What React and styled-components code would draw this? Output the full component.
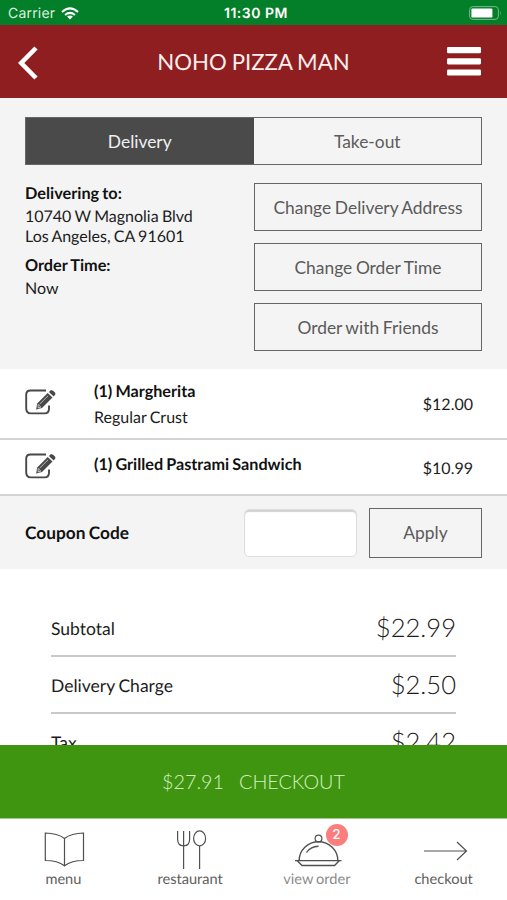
import React from "react";
import styled, { createGlobalStyle } from "styled-components";

const GlobalStyle = createGlobalStyle`
  * { box-sizing: border-box; }
  body { margin: 0; background: #fff; }
  button, input { font: inherit; word-spacing: inherit; }
`;

const Screen = styled.div`
  width: 507px;
  height: 900px;
  display: flex;
  flex-direction: column;
  overflow: hidden;
  background: #fff;
  color: #1c1c1c;
  font-family: Lato, sans-serif;
  font-size: 16px;
  word-spacing: -0.8px;
  text-rendering: geometricPrecision;
`;

const StatusBar = styled.div`
  height: 25px;
  flex: none;
  display: grid;
  grid-template-columns: 1fr auto 1fr;
  align-items: center;
  padding: 2px 5px 0 8px;
  background: #047f29;
  color: #fff;
  font-family: Inter, sans-serif;
  font-size: 14px;
  word-spacing: 0;
`;

const Carrier = styled.div`
  display: flex;
  align-items: center;
  gap: 6px;
  color: #d9f0df;
  letter-spacing: 0.2px;
`;

const Clock = styled.div`
  padding-left: 2px;
  font-weight: 600;
  font-size: 14px;
  letter-spacing: 0.5px;
`;

const BatterySlot = styled.div`
  display: flex;
  justify-content: flex-end;
  padding-bottom: 1px;
`;

const Header = styled.header`
  height: 73px;
  flex: none;
  display: grid;
  grid-template-columns: 60px 1fr 60px;
  align-items: center;
  background: #8e1e1f;
  color: #fbeeee;
`;

const Title = styled.h1`
  margin: 0;
  text-align: center;
  font-size: 22.2px;
  font-weight: 400;
`;

const IconButton = styled.button`
  display: flex;
  justify-content: ${(p) => p.$align};
  width: 60px;
  padding: 0 ${(p) => p.$right || 0}px 0 ${(p) => p.$left || 0}px;
  border: 0;
  background: none;
`;

const Content = styled.main`
  flex: 1;
  min-height: 0;
  overflow: hidden;
`;

const OrderPanel = styled.section`
  height: 271px;
  padding: 19px 25px 0;
  background: #f4f4f4;
`;

const Tabs = styled.div`
  display: grid;
  grid-template-columns: 1fr 1fr;
  height: 48px;
  border: 1px solid #666;
`;

const Tab = styled.button`
  border: 0;
  padding: 1px 0 0;
  font-size: 17.4px;
  background: ${(p) => (p.$active ? "#4a4a4a" : "transparent")};
  color: ${(p) => (p.$active ? "#f0f0f0" : "#5c5c5c")};
`;

const Details = styled.div`
  display: grid;
  grid-template-columns: 229px 228px;
  margin-top: 18px;
`;

const Address = styled.div`
  display: flex;
  flex-direction: column;
  padding-top: 1px;
  line-height: 20px;
`;

const Label = styled.div`
  font-weight: 700;
  font-size: 16.3px;
  color: #111;
  margin: ${(p) => (p.$spaced ? "9px 0 3px" : "0 0 3px")};
`;

const Actions = styled.div`
  display: flex;
  flex-direction: column;
  gap: 12px;
`;

const OutlineButton = styled.button`
  width: ${(p) => p.$width || 228}px;
  height: ${(p) => p.$height || 48}px;
  padding: 0;
  border: 1px solid #666;
  background: transparent;
  color: #5a5a5a;
  font-size: 17.4px;
`;

const ItemRow = styled.div`
  display: grid;
  grid-template-columns: 69px 1fr auto;
  align-items: center;
  height: ${(p) => p.$height}px;
  padding: 0 34px 0 25px;
  border-bottom: 2px solid #d4d4d4;
`;

const ItemText = styled.div`
  line-height: 26px;
  padding: 2px 0 ${(p) => p.$lift || 0}px;
`;

const ItemName = styled.div`
  font-weight: 700;
  color: #111;
  font-size: 16.2px;
`;

const Price = styled.div`
  padding-top: 2px;
`;

const Coupon = styled.section`
  display: flex;
  align-items: center;
  height: 73px;
  padding: 0 25px;
  background: #f4f4f4;
`;

const CouponLabel = styled.label`
  flex: 1;
  font-size: 17.3px;
  font-weight: 700;
  color: #111;
`;

const CouponInput = styled.input`
  width: 113px;
  height: 48px;
  margin-right: 12px;
  border: 1px solid #dedede;
  border-radius: 5px;
  background: #fff;
  box-shadow: inset 0 2px 1px #d2d2d2;
`;

const Totals = styled.section`
  padding: 31px 51px 0;
`;

const TotalRow = styled.div`
  display: flex;
  align-items: center;
  justify-content: space-between;
  height: 57px;
  padding-top: 2px;
  border-bottom: 2px solid #c9c9c9;
  font-size: 17.5px;
`;

const Amount = styled.span`
  padding-bottom: 2px;
  font-size: 25.6px;
  font-weight: 300;
`;

const Checkout = styled.button`
  flex: none;
  display: flex;
  align-items: center;
  justify-content: center;
  gap: 15px;
  height: 74px;
  padding: 0 0 1px;
  border: 0;
  border-bottom: 1px solid #a3c98c;
  background: #409510;
  color: #d3f0c0;
  font-size: 19.8px;
  font-weight: 300;
`;

const BottomNav = styled.nav`
  flex: none;
  display: grid;
  grid-template-columns: repeat(4, 1fr);
  height: 81px;
  background: #fff;
`;

const NavItem = styled.div`
  position: relative;
  display: flex;
  flex-direction: column;
  align-items: center;
  gap: 1px;
  padding-top: 10px;
  color: ${(p) => (p.$muted ? "#8b8b8b" : "#606060")};
  font-size: 14.6px;
  line-height: 18px;
`;

const NavIcon = styled.svg`
  width: 50px;
  height: 41px;
  fill: none;
  stroke: #505050;
  stroke-width: 1.2;
`;

const Badge = styled.span`
  position: absolute;
  top: 5px;
  left: 72px;
  width: 22px;
  height: 22px;
  border-radius: 50%;
  background: #fb7d7d;
  color: #fff;
  font: 500 13.5px/22px Inter, sans-serif;
  text-align: center;
`;

const WifiIcon = () => (
  <svg width="18" height="13" viewBox="0 0 18 13" fill="none" stroke="#fff" strokeWidth="2">
    <path d="M1 4.9Q9-2.1 17 4.9M4 8Q9 3.8 14 8" />
    <path d="M6.1 9.6Q9 7.4 11.9 9.6L9 12.5Z" fill="#fff" stroke="none" />
  </svg>
);

const BatteryIcon = () => (
  <svg width="33" height="14" viewBox="0 0 33 14">
    <rect x=".6" y=".6" width="28.8" height="12.8" rx="3.2" fill="none" stroke="#79b989" />
    <rect x="2.4" y="2.4" width="21" height="9.2" rx="1.2" fill="#fff" />
    <path d="M31 4.7q1.6 2.3 0 4.6z" fill="#79b989" />
  </svg>
);

const EditSvg = styled.svg`
  margin-bottom: 3px;
`;

const EditIcon = () => (
  <EditSvg width="31" height="26" viewBox="0 0 31 26" fill="none">
    <path d="M21 1.5H5.5Q1.2 1.5 1.2 5.8V19.3Q1.2 24.4 5.8 24.4H19.5Q24 24.4 24 19.5V16.5" stroke="#484848" strokeWidth="1.9" />
    <path d="M11.1 20.5L12.2 14.4L22.7 3.9L27.5 8.5L17 19Z" fill="#484848" />
    <path d="M23.9 2.9L26 1Q28 1 30.4 4Q31 5.2 28.7 7.4Z" fill="#484848" />
    <path d="M14.6 15.2L23.1 6.8M13.2 15.4L15.8 18.2L13 18.9Z" stroke="#d8d8d8" strokeWidth=".8" />
  </EditSvg>
);

const items = [
  { name: "(1) Margherita", note: "Regular Crust", price: "$12.00", height: 71 },
  { name: "(1) Grilled Pastrami Sandwich", price: "$10.99", height: 56, lift: 6 },
];

const totals = [
  ["Subtotal", "$22.99"],
  ["Delivery Charge", "$2.50"],
  ["Tax", "$2.42"],
];

export default function App() {
  return (
    <Screen>
      <GlobalStyle />
      <StatusBar>
        <Carrier>Carrier <WifiIcon /></Carrier>
        <Clock>11:30 PM</Clock>
        <BatterySlot><BatteryIcon /></BatterySlot>
      </StatusBar>
      <Header>
        <IconButton $align="flex-start" $left={18} aria-label="Back">
          <svg width="21" height="38" viewBox="0 0 21 38" fill="none" stroke="#fff" strokeWidth="4.6">
            <path d="M18 5L3.2 20L18 35" />
          </svg>
        </IconButton>
        <Title>NOHO PIZZA MAN</Title>
        <IconButton $align="flex-end" $right={26} aria-label="Open navigation">
          <svg width="34" height="30" viewBox="0 0 34 30" fill="#fff">
            <rect y="0" width="34" height="6.2" rx="1.3" />
            <rect y="11.2" width="34" height="6.2" rx="1.3" />
            <rect y="22.4" width="34" height="6.2" rx="1.3" />
          </svg>
        </IconButton>
      </Header>
      <Content>
        <OrderPanel>
          <Tabs>
            <Tab $active>Delivery</Tab>
            <Tab>Take-out</Tab>
          </Tabs>
          <Details>
            <Address>
              <Label>Delivering to:</Label>
              <span>10740 W Magnolia Blvd</span>
              <span>Los Angeles, CA 91601</span>
              <Label $spaced>Order Time:</Label>
              <span>Now</span>
            </Address>
            <Actions>
              <OutlineButton>Change Delivery Address</OutlineButton>
              <OutlineButton>Change Order Time</OutlineButton>
              <OutlineButton>Order with Friends</OutlineButton>
            </Actions>
          </Details>
        </OrderPanel>
        {items.map((item) => (
          <ItemRow key={item.name} $height={item.height}>
            <EditIcon />
            <ItemText $lift={item.lift}>
              <ItemName>{item.name}</ItemName>
              {item.note}
            </ItemText>
            <Price>{item.price}</Price>
          </ItemRow>
        ))}
        <Coupon>
          <CouponLabel htmlFor="coupon">Coupon Code</CouponLabel>
          <CouponInput id="coupon" />
          <OutlineButton $width={113} $height={50}>Apply</OutlineButton>
        </Coupon>
        <Totals>
          {totals.map(([label, amount]) => (
            <TotalRow key={label}>
              {label}
              <Amount>{amount}</Amount>
            </TotalRow>
          ))}
        </Totals>
      </Content>
      <Checkout><span>$27.91</span><span>CHECKOUT</span></Checkout>
      <BottomNav>
        <NavItem>
          <NavIcon viewBox="0 0 50 41">
            <path d="M26.5 9.5Q19.5 4.2 7.3 4V31.5Q19.5 31.5 26.5 36.8Q33.5 31.5 45.5 31.5V4Q33.5 4.2 26.5 9.5V37.5" />
          </NavIcon>
          menu
        </NavItem>
        <NavItem>
          <NavIcon viewBox="0 0 50 41">
            <path d="M12.6 2V10Q12.6 16.8 18.6 16.8Q24.6 16.8 24.6 10V2M18.6 2V40M34.6 17V40" />
            <ellipse cx="34.6" cy="9.4" rx="6" ry="7.5" />
          </NavIcon>
          restaurant
        </NavItem>
        <NavItem $muted>
          <NavIcon viewBox="0 0 50 41">
            <circle cx="26.5" cy="9.5" r="3.4" />
            <path d="M7.2 31.3A19.3 18.6 0 0 1 45.8 31.3M3 31.6H49.5M5 31.6L10 36.5H42.5L47.5 31.6M14.5 23.5Q18 17.7 26.5 17.2" strokeWidth="1.4" />
          </NavIcon>
          view order
          <Badge>2</Badge>
        </NavItem>
        <NavItem>
          <NavIcon viewBox="0 0 50 41">
            <path d="M5 22H47.5M38 13L47.5 22L38 31" />
          </NavIcon>
          checkout
        </NavItem>
      </BottomNav>
    </Screen>
  );
}
